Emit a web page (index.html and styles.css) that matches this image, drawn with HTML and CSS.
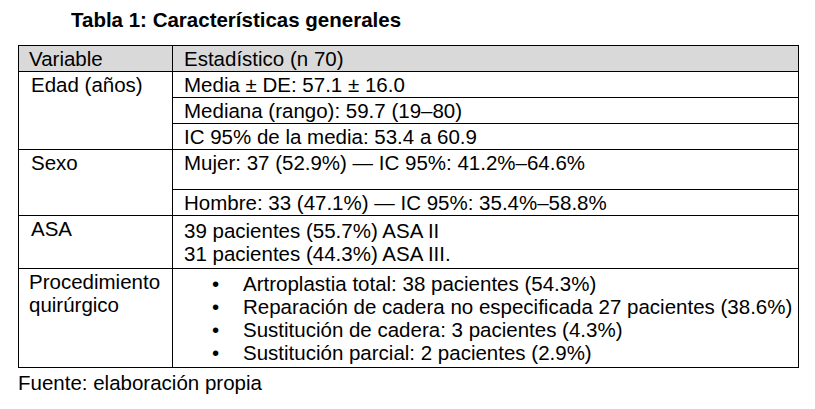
FILE: index.html
```html
<!DOCTYPE html>
<html lang="es">
<head>
<meta charset="utf-8">
<title>Tabla 1</title>
<link rel="stylesheet" href="styles.css">
</head>
<body>
<div class="page">
  <h1 class="title">Tabla 1: Características generales</h1>
  <table class="data">
    <thead>
      <tr class="head">
        <th class="c1">Variable</th>
        <th class="c2">Estadístico (n 70)</th>
      </tr>
    </thead>
    <tbody>
      <tr>
        <td class="c1 ind" rowspan="3">Edad (años)</td>
        <td class="c2">Media ± DE: 57.1 ± 16.0</td>
      </tr>
      <tr><td class="c2">Mediana (rango): 59.7 (19–80)</td></tr>
      <tr><td class="c2">IC 95% de la media: 53.4 a 60.9</td></tr>
      <tr>
        <td class="c1 ind" rowspan="2">Sexo</td>
        <td class="c2 tall">Mujer: 37 (52.9%) — IC 95%: 41.2%–64.6%</td>
      </tr>
      <tr><td class="c2">Hombre: 33 (47.1%) — IC 95%: 35.4%–58.8%</td></tr>
      <tr>
        <td class="c1 ind">ASA</td>
        <td class="c2 multi">39 pacientes (55.7%) ASA II<br>31 pacientes (44.3%) ASA III.</td>
      </tr>
      <tr>
        <td class="c1">Procedimiento<br>quirúrgico</td>
        <td class="c2 list-cell">
          <ul class="bullets">
            <li>Artroplastia total: 38 pacientes (54.3%)</li>
            <li>Reparación de cadera no especificada 27 pacientes (38.6%)</li>
            <li>Sustitución de cadera: 3 pacientes (4.3%)</li>
            <li>Sustitución parcial: 2 pacientes (2.9%)</li>
          </ul>
        </td>
      </tr>
    </tbody>
  </table>
  <p class="source">Fuente: elaboración propia</p>
</div>
</body>
</html>
```

FILE: styles.css
```css
html, body {
  margin: 0;
  padding: 0;
  background: #ffffff;
}

body {
  font-family: "Liberation Sans", Arial, sans-serif;
  font-size: 20.5px;
  line-height: 23px;
  color: #000000;
}

.page {
  padding: 8px 0 0 18px;
  width: 781px;
}

.title {
  margin: 0 0 14px 53px;
  font-size: 20.5px;
  line-height: 23px;
  font-weight: bold;
}

.data {
  border-collapse: collapse;
  width: 781px;
  table-layout: fixed;
}

.data th,
.data td {
  border: 1px solid #000000;
  padding: 1px 0 1px 0;
  text-align: left;
  vertical-align: top;
  font-weight: normal;
}

.data .c1 {
  width: 143px;
  padding-left: 10px;
}

.data .c2 {
  padding-left: 11px;
}

.data .ind {
  padding-left: 12px;
}

.head th {
  background: #d9d9d9;
}

.data .tall {
  padding-bottom: 15px;
}

.data .multi {
  padding-top: 3px;
  padding-bottom: 3px;
}

.data .list-cell {
  padding-top: 3px;
  padding-bottom: 3px;
}

.bullets {
  list-style: none;
  margin: 0;
  padding: 0;
}

.bullets li {
  position: relative;
  padding-left: 59px;
  line-height: 23px;
}

.bullets li::before {
  content: "•";
  position: absolute;
  left: 28px;
  top: 0;
}

.source {
  margin: 3px 0 0 0;
}
```
